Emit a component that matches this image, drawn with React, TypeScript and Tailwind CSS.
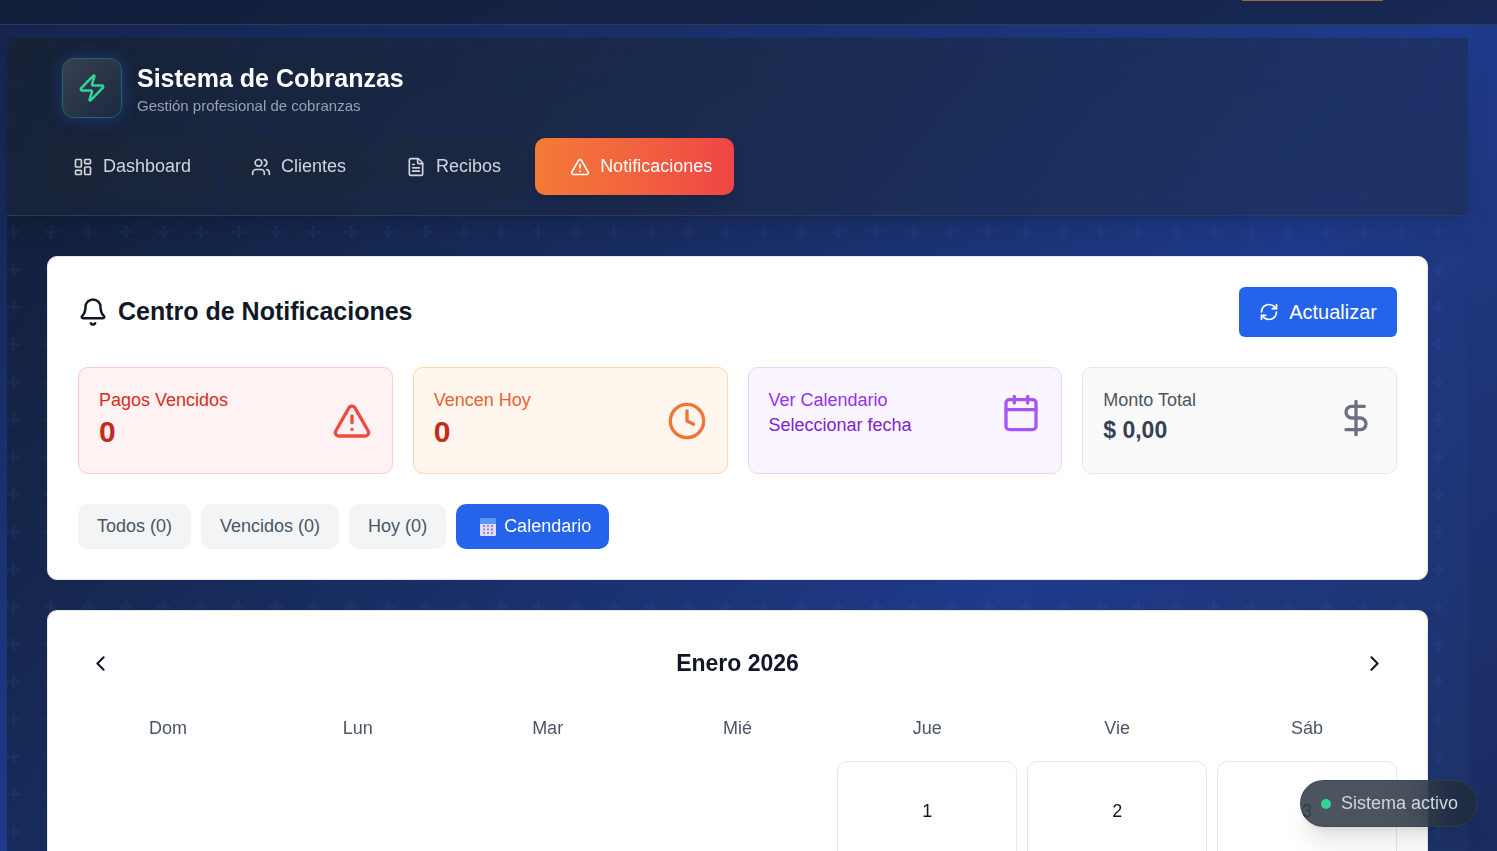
import React, { useState } from 'react';
import {
  Bell,
  Calendar,
  ChevronLeft,
  ChevronRight,
  Clock,
  DollarSign,
  FileText,
  LayoutDashboard,
  RefreshCw,
  TriangleAlert,
  Users,
  Zap,
} from 'lucide-react';

const tabs = [
  { label: 'Dashboard', icon: LayoutDashboard },
  { label: 'Clientes', icon: Users },
  { label: 'Recibos', icon: FileText },
];

const filters = ['Todos (0)', 'Vencidos (0)', 'Hoy (0)'];
const weekDays = ['Dom', 'Lun', 'Mar', 'Mié', 'Jue', 'Vie', 'Sáb'];

// January 2026 starts on a Thursday
const cells: (number | null)[] = [
  ...Array(4).fill(null),
  ...Array.from({ length: 31 }, (_, i) => i + 1),
];

const PlusPattern: React.FC = () => (
  <svg className="absolute left-0 top-0 h-full w-[1436px] max-w-full" aria-hidden="true">
    <defs>
      <pattern id="plus" x="0" y="-6" width="75" height="75" patternUnits="userSpaceOnUse">
        <g fill="#4a68c0" fillOpacity="0.11">
          <path d="M5 6h3v5h5v3H8v5H5v-5H0v-3h5z" />
          <path d="M42.500 6h3v5h5v3h-5v5h-3v-5h-5v-3h5z" />
          <path d="M5 43.500h3v5h5v3H8v5H5v-5H0v-3h5z" />
          <path d="M42.500 43.500h3v5h5v3h-5v5h-3v-5h-5v-3h5z" />
        </g>
      </pattern>
    </defs>
    <rect width="100%" height="100%" fill="url(#plus)" />
  </svg>
);

const CalendarEmoji: React.FC = () => (
  <svg width="18" height="18" viewBox="0 0 18 18" aria-hidden="true">
    <rect x="1" y="4" width="16" height="14" rx="1" fill="#e6d9f7" />
    <path d="M2 0h14a1 1 0 0 1 1 1v5H1V1a1 1 0 0 1 1-1z" fill="#5b95f5" />
    <g fill="#9a8fb5">
      <rect x="4" y="7" width="2" height="2" />
      <rect x="8" y="7" width="2" height="2" />
      <rect x="12" y="7" width="2" height="2" />
      <rect x="4" y="10.500" width="2" height="2" />
      <rect x="8" y="10.500" width="2" height="2" />
      <rect x="4" y="14" width="2" height="2" />
      <rect x="8" y="14" width="2" height="2" />
      <rect x="12" y="14" width="2" height="2" />
    </g>
    <rect x="12" y="10.500" width="2" height="2" fill="#3b9cf0" />
  </svg>
);

const Header: React.FC = () => (
  <header className="relative border-b border-[#2d3b55] bg-[#1f2937]/40 px-10 py-5 shadow-xl backdrop-blur-xl">
    <div className="flex items-center gap-[15px] pl-[15px]">
      <div className="flex size-[60px] items-center justify-center rounded-xl border border-[#1f6b5c] bg-linear-to-br from-[#374151] to-[#1b2940] shadow-[0_0_16px_rgba(37,70,170,0.6)]">
        <Zap className="size-[30px] text-[#34d399]" />
      </div>
      <div>
        <h1 className="text-[25px] font-bold leading-[35px] text-white">Sistema de Cobranzas</h1>
        <p className="text-[15px] leading-[20px] text-gray-400">Gestión profesional de cobranzas</p>
      </div>
    </div>
    <nav className="mt-5 flex gap-[10px]">
      {tabs.map(({ label, icon: Icon }) => (
        <button
          key={label}
          className="flex h-[57px] items-center gap-[10px] rounded-[10px] bg-[#1f2937]/40 pl-[26px] pr-6 text-[18px] text-gray-300"
        >
          <Icon className="size-5" />
          {label}
        </button>
      ))}
      <button className="flex h-[57px] items-center gap-[10px] rounded-[10px] bg-linear-to-r from-[#f47b36] to-[#ef4444] pl-[35px] pr-[22px] text-[18px] text-white shadow-lg">
        <TriangleAlert className="size-5" />
        Notificaciones
      </button>
    </nav>
  </header>
);

const Summary: React.FC = () => (
  <div className="mt-[30px] grid grid-cols-4 gap-5">
    <div className="flex h-[107px] items-center justify-between rounded-[10px] border border-[#fecaca] bg-[#fef2f2] px-5">
      <div className="pb-[3px]">
        <p className="text-[18px] leading-[25px] text-[#d92d20]">Pagos Vencidos</p>
        <p className="text-[30px] font-bold leading-[38px] text-[#c42b1c]">0</p>
      </div>
      <TriangleAlert className="size-10 text-[#ef4b42]" />
    </div>
    <div className="flex h-[107px] items-center justify-between rounded-[10px] border border-[#fed7aa] bg-[#fff7ed] px-5">
      <div className="pb-[3px]">
        <p className="text-[18px] leading-[25px] text-[#ec5f2c]">Vencen Hoy</p>
        <p className="text-[30px] font-bold leading-[38px] text-[#c42b1c]">0</p>
      </div>
      <Clock className="size-10 text-[#f27536]" />
    </div>
    <button className="flex h-[107px] items-start justify-between rounded-[10px] border border-[#e9d5ff] bg-[#faf5ff] px-5 pt-5 text-left">
      <span className="text-[18px] leading-[25px]">
        <span className="block text-[#9333ea]">Ver Calendario</span>
        <span className="block text-[#7e22ce]">Seleccionar fecha</span>
      </span>
      <Calendar className="mt-[5px] size-10 text-[#a855f7]" />
    </button>
    <div className="flex h-[107px] items-start justify-between rounded-[10px] border border-gray-200 bg-[#fafafa] px-5 pt-5">
      <div>
        <p className="text-[18px] leading-[25px] text-gray-600">Monto Total</p>
        <p className="text-[23px] font-bold leading-[35px] text-gray-700">$ 0,00</p>
      </div>
      <DollarSign className="mt-[10px] size-10 text-gray-500" />
    </div>
  </div>
);

const CalendarView: React.FC = () => (
  <section className="rounded-[10px] border border-gray-200 bg-white p-[30px]">
    <div className="flex items-center justify-between">
      <button aria-label="Mes anterior" className="flex size-[45px] items-center justify-center text-gray-900">
        <ChevronLeft className="size-[25px]" />
      </button>
      <h3 className="text-[23px] font-bold text-gray-900">Enero 2026</h3>
      <button aria-label="Mes siguiente" className="flex size-[45px] items-center justify-center text-gray-900">
        <ChevronRight className="size-[25px]" />
      </button>
    </div>
    <div className="mt-5 grid grid-cols-7 gap-[10px]">
      {weekDays.map((day) => (
        <div key={day} className="py-[10px] text-center text-[18px] leading-[25px] text-gray-600">
          {day}
        </div>
      ))}
      {cells.map((day, i) =>
        day === null ? (
          <div key={i} />
        ) : (
          <button key={i} className="h-[100px] rounded-[10px] border border-gray-200 text-[18px] text-gray-900">
            {day}
          </button>
        )
      )}
    </div>
  </section>
);

const App: React.FC = () => {
  const [filter, setFilter] = useState('Calendario');

  return (
    <div className="min-h-screen bg-linear-to-br from-[#15234c] via-[#1e3a8a] to-[#1b2c60] bg-fixed font-['Liberation_Sans',Arial,sans-serif]">
      <div className="flex h-[25px] items-start justify-end border-b border-[#2d3b55] bg-[#111c2e]/60 pr-[114px]">
        <div className="h-px w-[141px] bg-[#99683f]" />
      </div>
      <div className="relative ml-[7px] mr-[29px] mt-[13px] min-h-[1750px] bg-linear-to-br from-[#111d33] via-[#1e3a8a] to-[#1a2740]">
        <PlusPattern />
        <Header />
        <main className="relative flex flex-col gap-[30px] p-10">
          <section className="rounded-[10px] border border-gray-200 bg-white p-[30px]">
            <div className="flex items-center justify-between">
              <h2 className="flex items-center gap-[10px] text-[25px] font-bold text-gray-900">
                <Bell className="size-[30px]" />
                Centro de Notificaciones
              </h2>
              <button className="flex h-[50px] items-center gap-[10px] rounded-md bg-[#2563eb] px-5 text-[20px] text-white">
                <RefreshCw className="size-5" />
                Actualizar
              </button>
            </div>
            <Summary />
            <div className="mt-[30px] flex gap-[10px]">
              {filters.map((label) => (
                <button
                  key={label}
                  onClick={() => setFilter(label)}
                  className="h-[45px] rounded-[10px] bg-gray-100 px-[19px] text-[18px] text-gray-600"
                >
                  {label}
                </button>
              ))}
              <button
                onClick={() => setFilter('Calendario')}
                aria-pressed={filter === 'Calendario'}
                className="flex h-[45px] items-center gap-[7px] rounded-[10px] bg-[#2563eb] pl-[23px] pr-[18px] text-[18px] text-white"
              >
                <CalendarEmoji />
                Calendario
              </button>
            </div>
          </section>
          <CalendarView />
        </main>
      </div>
      <div className="fixed bottom-6 right-5 flex h-[47px] items-center gap-[10px] rounded-full border border-[#374151]/60 bg-[#1f2937]/80 pl-5 pr-[18px] text-[18px] text-gray-300 shadow-xl backdrop-blur-xl">
        <span className="size-[10px] rounded-full bg-[#34d399]" />
        Sistema activo
      </div>
    </div>
  );
};

export default App;
